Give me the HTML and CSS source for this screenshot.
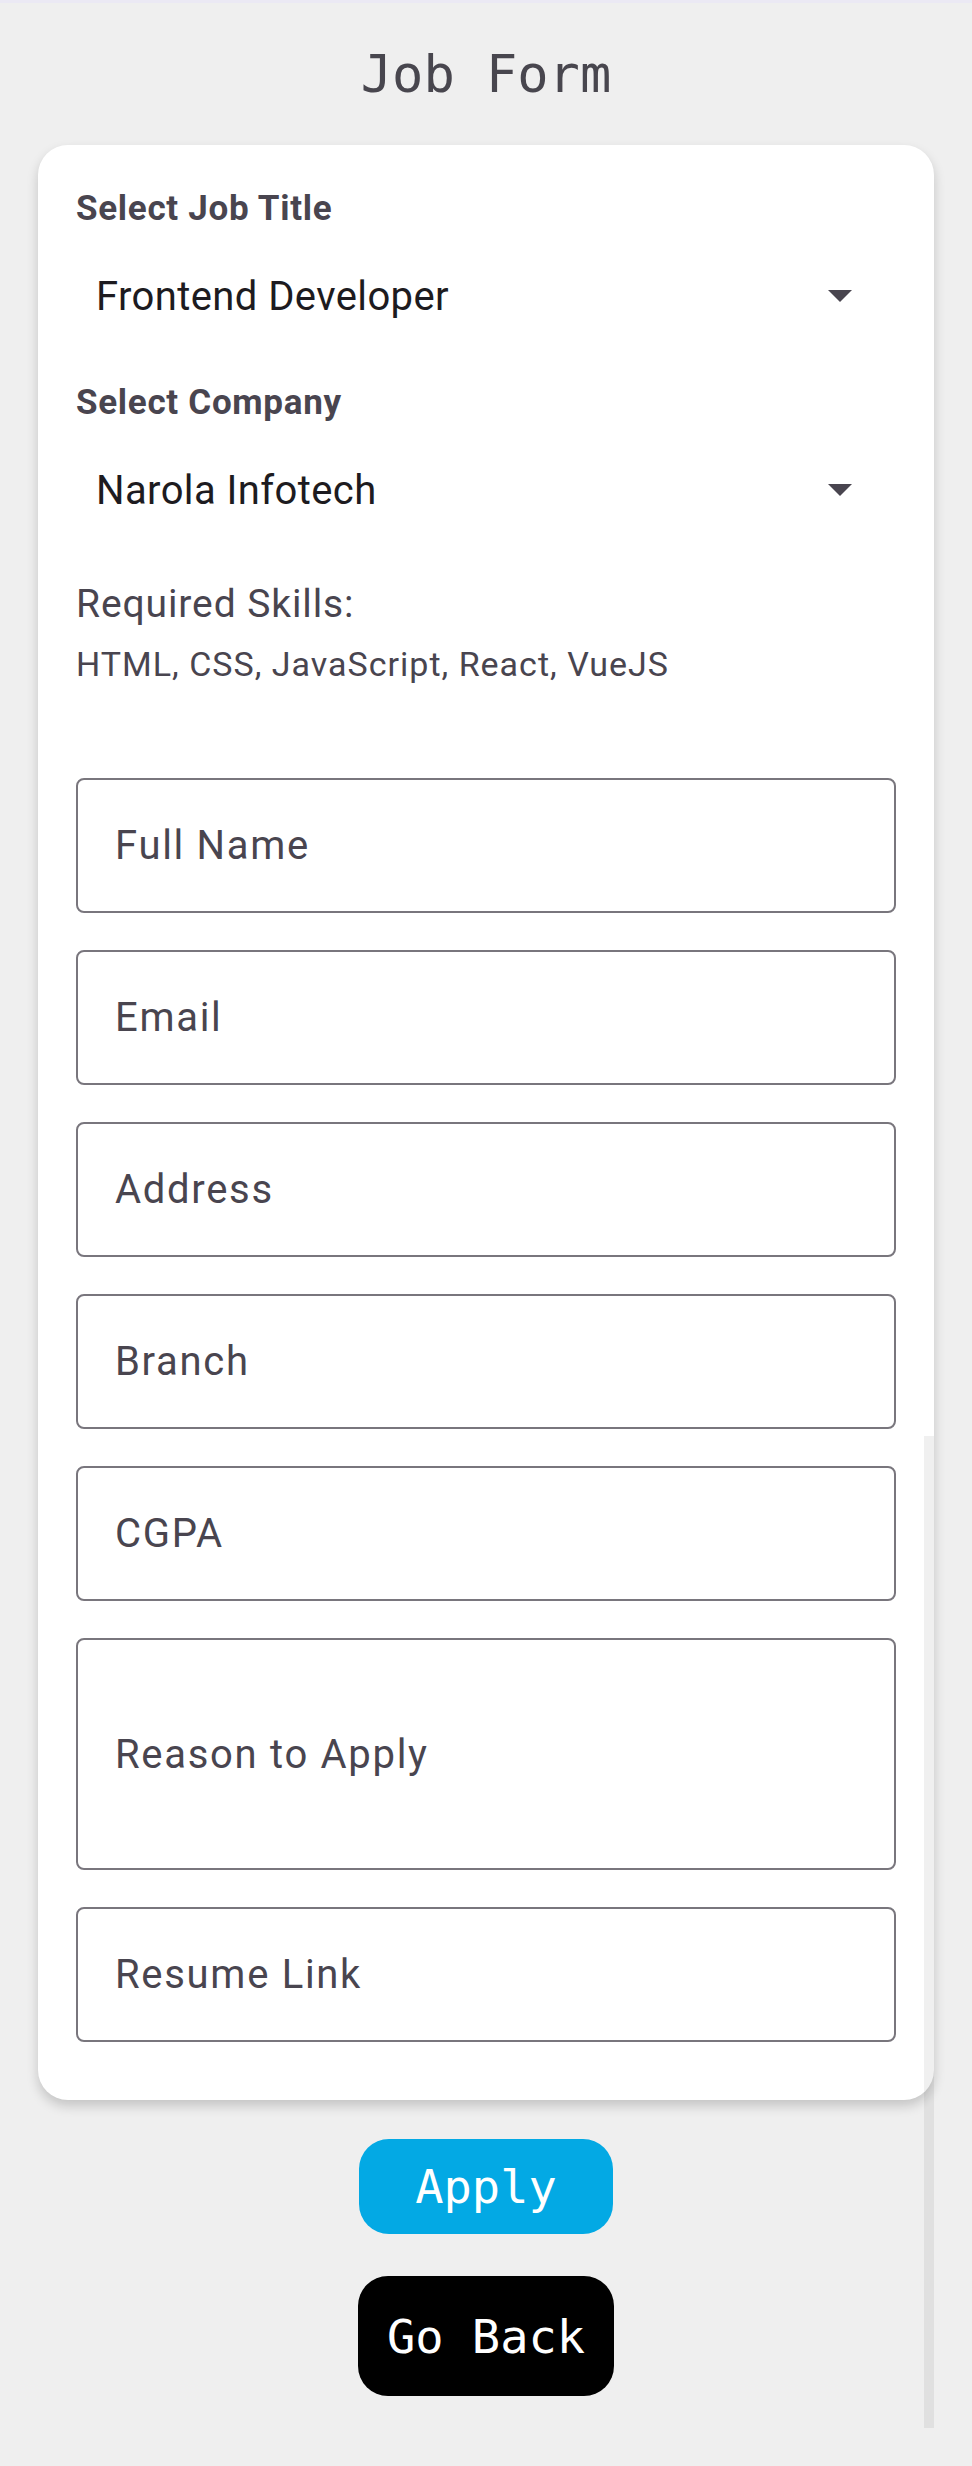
FILE: index.html
```html
<!DOCTYPE html>
<html>
<head>
<meta charset="utf-8">
<link rel="stylesheet" href="styles.css">
</head>
<body>
<div class="statusbar"></div>
<h1 class="title">Job Form</h1>
<div class="card">
  <div class="label">Select Job Title</div>
  <div class="select">
    <span class="select-value">Frontend Developer</span>
    <svg class="arrow" width="24" height="12" viewBox="0 0 24 12"><path d="M0 0 H24 L12 12 Z" fill="#49454f"/></svg>
  </div>
  <div class="label label-2">Select Company</div>
  <div class="select">
    <span class="select-value">Narola Infotech</span>
    <svg class="arrow" width="24" height="12" viewBox="0 0 24 12"><path d="M0 0 H24 L12 12 Z" fill="#49454f"/></svg>
  </div>
  <div class="skills-title">Required Skills:</div>
  <div class="skills">HTML, CSS, JavaScript, React, VueJS</div>
  <div class="fields">
    <div class="field">Full Name</div>
    <div class="field">Email</div>
    <div class="field">Address</div>
    <div class="field">Branch</div>
    <div class="field">CGPA</div>
    <div class="field field-tall">Reason to Apply</div>
    <div class="field">Resume Link</div>
  </div>
</div>
<div class="actions">
  <button class="btn btn-apply">Apply</button>
  <button class="btn btn-back">Go Back</button>
</div>
<div class="scroll-track"></div>
</body>
</html>
```
FILE: styles.css
```css
html, body {
  margin: 0;
  padding: 0;
}
body {
  background: #efefef;
  width: 972px;
  height: 2466px;
  position: relative;
  overflow: hidden;
  font-family: Roboto, "Noto Sans", sans-serif;
}
.statusbar {
  height: 3px;
  background: #ebe9f4;
}
.title {
  margin: 0;
  height: 142px;
  display: flex;
  align-items: center;
  justify-content: center;
  font-family: "DejaVu Sans Mono", monospace;
  font-weight: normal;
  font-size: 52px;
  color: #48464e;
}
.card {
  margin: 0 38px;
  background: #fff;
  border-radius: 30px;
  padding: 44px 38px 58px;
  box-shadow: 0 6px 12px rgba(0, 0, 0, 0.18);
}
.label {
  font-size: 35px;
  line-height: 40px;
  letter-spacing: 0.7px;
  font-weight: 700;
  color: #49454f;
}
.label-2 {
  margin-top: 40px;
}
.select {
  margin-top: 20px;
  height: 94px;
  display: flex;
  align-items: center;
  justify-content: space-between;
  padding: 0 44px 0 20px;
}
.select-value {
  font-size: 40px;
  letter-spacing: 0.4px;
  color: #1d1b20;
}
.arrow {
  display: block;
}
.skills-title {
  margin-top: 44px;
  font-size: 39px;
  line-height: 46px;
  letter-spacing: 0.9px;
  color: #49454f;
}
.skills {
  margin-top: 17px;
  font-size: 34px;
  line-height: 40px;
  letter-spacing: 1px;
  color: #49454f;
}
.fields {
  margin-top: 94px;
  display: flex;
  flex-direction: column;
  gap: 37px;
}
.field {
  box-sizing: border-box;
  height: 135px;
  border: 2px solid #79767d;
  border-radius: 8px;
  padding-left: 37px;
  display: flex;
  align-items: center;
  font-size: 40px;
  letter-spacing: 1.7px;
  color: #49454f;
}
.field-tall {
  height: 232px;
}
.actions {
  display: flex;
  flex-direction: column;
  align-items: center;
  gap: 42px;
  margin-top: 39px;
}
.btn {
  border: none;
  color: #fff;
  font-family: "DejaVu Sans Mono", monospace;
  font-size: 47px;
  border-radius: 30px;
  padding: 0;
}
.btn-apply {
  width: 254px;
  height: 95px;
  background: #03a9e4;
}
.btn-back {
  width: 256px;
  height: 120px;
  background: #000;
}
.scroll-track {
  position: absolute;
  left: 924px;
  top: 1436px;
  width: 10px;
  height: 992px;
  background: rgba(0, 0, 0, 0.06);
}
```
